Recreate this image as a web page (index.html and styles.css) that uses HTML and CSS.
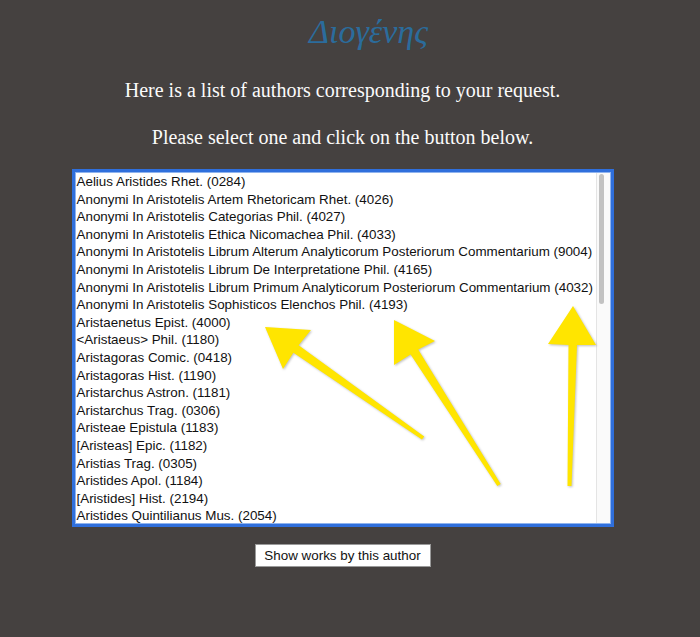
FILE: index.html
```html
<!DOCTYPE html>
<html>
<head>
<meta charset="utf-8">
<link rel="stylesheet" href="styles.css">
</head>
<body>
<div class="page">
  <h1 class="title">Διογένης</h1>
  <p class="msg">Here is a list of authors corresponding to your request.</p>
  <p class="msg">Please select one and click on the button below.</p>
  <div class="listbox">
    <ul class="items">
      <li>Aelius Aristides Rhet. (0284)</li>
      <li>Anonymi In Aristotelis Artem Rhetoricam Rhet. (4026)</li>
      <li>Anonymi In Aristotelis Categorias Phil. (4027)</li>
      <li>Anonymi In Aristotelis Ethica Nicomachea Phil. (4033)</li>
      <li>Anonymi In Aristotelis Librum Alterum Analyticorum Posteriorum Commentarium (9004)</li>
      <li>Anonymi In Aristotelis Librum De Interpretatione Phil. (4165)</li>
      <li>Anonymi In Aristotelis Librum Primum Analyticorum Posteriorum Commentarium (4032)</li>
      <li>Anonymi In Aristotelis Sophisticos Elenchos Phil. (4193)</li>
      <li>Aristaenetus Epist. (4000)</li>
      <li>&lt;Aristaeus&gt; Phil. (1180)</li>
      <li>Aristagoras Comic. (0418)</li>
      <li>Aristagoras Hist. (1190)</li>
      <li>Aristarchus Astron. (1181)</li>
      <li>Aristarchus Trag. (0306)</li>
      <li>Aristeae Epistula (1183)</li>
      <li>[Aristeas] Epic. (1182)</li>
      <li>Aristias Trag. (0305)</li>
      <li>Aristides Apol. (1184)</li>
      <li>[Aristides] Hist. (2194)</li>
      <li>Aristides Quintilianus Mus. (2054)</li>
    </ul>
    <div class="track"><div class="thumb"></div></div>
  </div>
  <div class="actions">
    <button class="btn">Show works by this author</button>
  </div>
</div>
<svg class="arrows" width="700" height="637" viewBox="0 0 700 637">
  <g fill="#ffe500">
    <polygon points="265,327 311,330 298.6,345.3 424.2,436.4 421.9,439.6 293.4,352.7 283,369"/>
    <polygon points="394,320 435,341 418.2,349.6 500.7,483.9 497.3,486.1 410.6,354.4 394,365"/>
    <polygon points="573,306 596,345 577,345 571.5,486 567.5,486 568.5,345 548,344"/>
  </g>
</svg>
</body>
</html>
```

FILE: styles.css
```css
html, body {
  margin: 0;
  padding: 0;
}
body {
  background: #454140;
  position: relative;
  width: 700px;
  height: 637px;
  overflow: hidden;
}
.page {
  width: 685px;
  display: flex;
  flex-direction: column;
  align-items: center;
}
.title {
  margin: 12px 0 0 52px;
  font-family: "Liberation Serif", serif;
  font-style: italic;
  font-weight: normal;
  font-size: 34px;
  line-height: 40px;
  color: #2b6c9c;
}
.msg {
  margin: 25px 0 0 0;
  font-family: "Liberation Serif", serif;
  font-size: 20px;
  line-height: 26px;
  color: #fbfbfb;
}
.msg + .msg {
  margin-top: 21px;
}
.listbox {
  margin-top: 22px;
  width: 534px;
  height: 350px;
  background: #fff;
  border: 1px solid #8fb3ee;
  box-shadow: 0 0 0 3px #2f6fdc;
  display: flex;
  overflow: hidden;
}
.items {
  flex: 1;
  list-style: none;
  margin: 0;
  padding: 0 0 0 1px;
  font-family: "Liberation Sans", Arial, sans-serif;
  font-size: 13.4px;
  line-height: 17.6px;
  color: #111;
  white-space: nowrap;
}
.track {
  width: 9px;
  border-left: 1px solid #e4e4e4;
  background: #fafafa;
  padding: 1px 2px 0 2px;
}
.thumb {
  width: 5px;
  height: 130px;
  border-radius: 3px;
  background: #c2c2c2;
}
.actions {
  margin-top: 20px;
}
.btn {
  width: 176px;
  height: 23px;
  padding: 0;
  background: #fff;
  border: 1px solid #9a9a9a;
  border-radius: 0;
  font-family: "Liberation Sans", Arial, sans-serif;
  font-size: 13.4px;
  color: #111;
}
.arrows {
  position: absolute;
  left: 0;
  top: 0;
  pointer-events: none;
  filter: drop-shadow(1px 1px 1px rgba(0, 0, 0, 0.25));
}
```
